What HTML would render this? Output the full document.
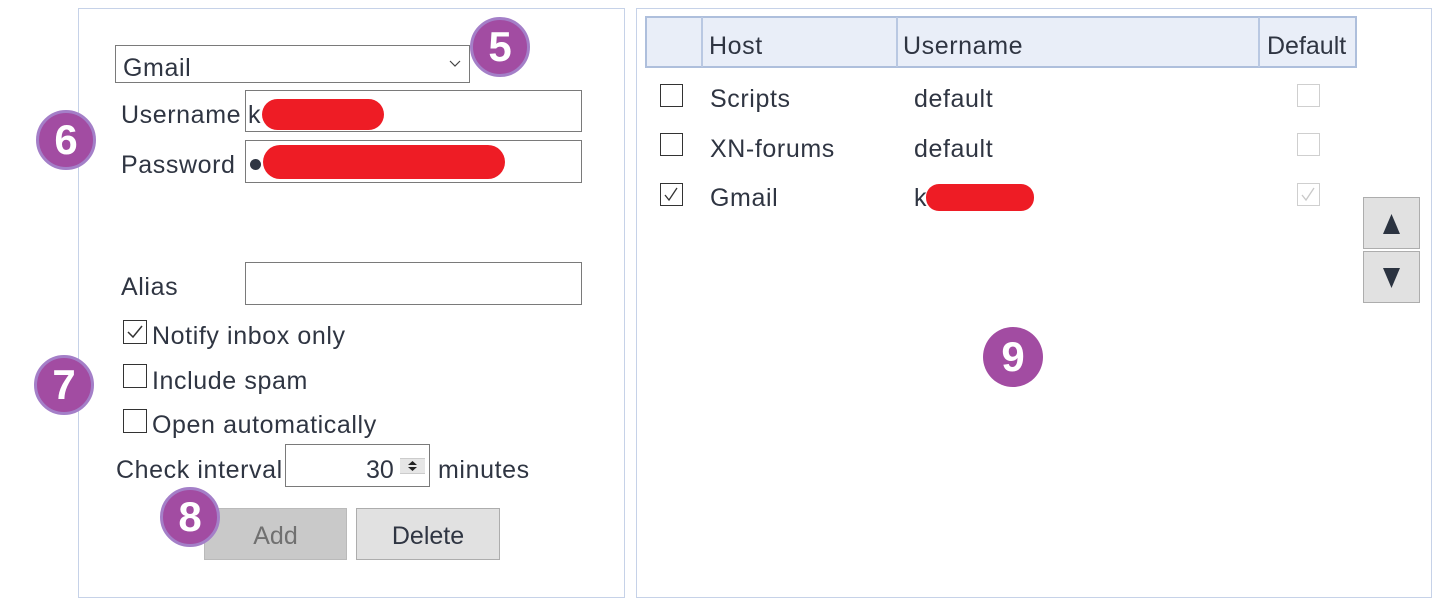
<!DOCTYPE html>
<html><head><style>
*{margin:0;padding:0;box-sizing:border-box}
body{width:1437px;height:602px;background:#fff;position:relative;overflow:hidden;font-family:"Liberation Sans",sans-serif;color:#2f3542;font-size:25px}
.a{position:absolute}
.panel{position:absolute;border:1px solid #c6d2e8}
.t{position:absolute;line-height:30px;white-space:nowrap;letter-spacing:0.6px;margin-top:2px}
.inp{position:absolute;border:1px solid #7a7a7a;background:#fff}
.cb{position:absolute;width:24px;height:24px;border:1.5px solid #333;background:#fff}
.cb2{position:absolute;width:23px;height:23px;border:1px solid #cfcfcf;background:#fff}
.badge{position:absolute;width:60px;height:60px;border-radius:50%;background:#a24ca2;border:3px solid #a47fc8;color:#fff;font-weight:bold;font-size:42px;text-align:center;line-height:54px}
.red{position:absolute;background:#ee1c25;border-radius:16px}
.btn{position:absolute;text-align:center}
</style></head><body>
<div class="panel" style="left:78px;top:8px;width:547px;height:590px"></div>
<div class="panel" style="left:636px;top:8px;width:796px;height:590px"></div>

<div class="inp" style="left:115px;top:45px;width:355px;height:38px"></div>
<div class="t" style="left:123px;top:51px">Gmail</div>
<svg class="a" style="left:449px;top:60px" width="12" height="8"><path d="M1 1 L6 6 L11 1" stroke="#444" fill="none" stroke-width="1.2"/></svg>
<div class="badge" style="left:470px;top:17px">5</div>

<div class="t" style="left:121px;top:98px">Username</div>
<div class="inp" style="left:245px;top:90px;width:337px;height:42px"></div>
<div class="t" style="left:248px;top:98px">k</div>
<div class="red" style="left:262px;top:99px;width:122px;height:31px"></div>
<div class="t" style="left:121px;top:148px">Password</div>
<div class="inp" style="left:245px;top:140px;width:337px;height:43px"></div>
<div class="a" style="left:250px;top:159px;width:11px;height:11px;border-radius:50%;background:#2f3542"></div>
<div class="red" style="left:263px;top:145px;width:242px;height:34px;border-radius:17px"></div>
<div class="badge" style="left:36px;top:110px">6</div>

<div class="t" style="left:121px;top:270px">Alias</div>
<div class="inp" style="left:245px;top:262px;width:337px;height:43px"></div>

<div class="cb" style="left:123px;top:320px"></div>
<svg class="a" style="left:123px;top:320px" width="24" height="24"><path d="M5 12 L10 17 L19 6" stroke="#333" fill="none" stroke-width="1.5"/></svg>
<div class="t" style="left:152px;top:319px">Notify inbox only</div>
<div class="cb" style="left:123px;top:364px"></div>
<div class="t" style="left:152px;top:364px">Include spam</div>
<div class="cb" style="left:123px;top:409px"></div>
<div class="t" style="left:152px;top:408px">Open automatically</div>
<div class="badge" style="left:34px;top:355px">7</div>

<div class="t" style="left:116px;top:453px">Check interval</div>
<div class="inp" style="left:285px;top:444px;width:145px;height:43px"></div>
<div class="t" style="left:366px;top:453px;letter-spacing:0">30</div>
<div class="a" style="left:400px;top:458px;width:25px;height:16px;background:#e6e6e6;border-top:1px solid #ccc;border-bottom:1px solid #ccc"></div>
<svg class="a" style="left:400px;top:458px" width="25" height="16"><path d="M8 7 L12.5 3 L17 7Z M8 9 L12.5 13 L17 9Z" fill="#222"/></svg>
<div class="t" style="left:438px;top:453px">minutes</div>

<div class="btn" style="left:204px;top:508px;width:143px;height:52px;background:#c9c9c9;border:1px solid #bababa;color:#707070;line-height:54px">Add</div>
<div class="btn" style="left:356px;top:508px;width:144px;height:52px;background:#e1e1e1;border:1px solid #adadad;color:#2f3542;line-height:54px">Delete</div>
<div class="badge" style="left:160px;top:487px">8</div>

<div class="a" style="left:645px;top:16px;width:712px;height:52px;background:#e9eef8;border:2px solid #aebfdc"></div>
<div class="a" style="left:701px;top:17px;width:2px;height:50px;background:#b9c8e2"></div>
<div class="a" style="left:896px;top:17px;width:2px;height:50px;background:#b9c8e2"></div>
<div class="a" style="left:1258px;top:17px;width:2px;height:50px;background:#b9c8e2"></div>
<div class="t" style="left:709px;top:29px">Host</div>
<div class="t" style="left:903px;top:29px">Username</div>
<div class="t" style="left:1267px;top:29px;letter-spacing:0">Default</div>

<div class="cb" style="left:660px;top:84px;width:23px;height:23px;border-width:1px"></div>
<div class="t" style="left:710px;top:82px">Scripts</div>
<div class="t" style="left:914px;top:82px">default</div>
<div class="cb2" style="left:1297px;top:84px"></div>

<div class="cb" style="left:660px;top:133px;width:23px;height:23px;border-width:1px"></div>
<div class="t" style="left:710px;top:132px">XN-forums</div>
<div class="t" style="left:914px;top:132px">default</div>
<div class="cb2" style="left:1297px;top:133px"></div>

<div class="cb" style="left:660px;top:183px;width:23px;height:23px;border-width:1px"></div>
<svg class="a" style="left:660px;top:183px" width="23" height="23"><path d="M5 12 L9 17 L17 5" stroke="#333" fill="none" stroke-width="1.3"/></svg>
<div class="t" style="left:710px;top:181px">Gmail</div>
<div class="t" style="left:914px;top:181px">k</div>
<div class="red" style="left:926px;top:184px;width:108px;height:27px;border-radius:13px"></div>
<div class="cb2" style="left:1297px;top:183px"></div>
<svg class="a" style="left:1297px;top:183px" width="23" height="23"><path d="M5 12 L9 17 L17 5" stroke="#c8c8c8" fill="none" stroke-width="1.3"/></svg>

<div class="a" style="left:1363px;top:197px;width:57px;height:52px;background:#e1e1e1;border:1px solid #adadad"></div>
<svg class="a" style="left:1363px;top:197px" width="57" height="52"><path d="M20 37 L28.5 17 L37 37Z" fill="#2b3340"/></svg>
<div class="a" style="left:1363px;top:251px;width:57px;height:52px;background:#e1e1e1;border:1px solid #adadad"></div>
<svg class="a" style="left:1363px;top:251px" width="57" height="52"><path d="M20 17 L28.5 37 L37 17Z" fill="#2b3340"/></svg>

<div class="badge" style="left:983px;top:327px;border:none;line-height:60px">9</div>
</body></html>
